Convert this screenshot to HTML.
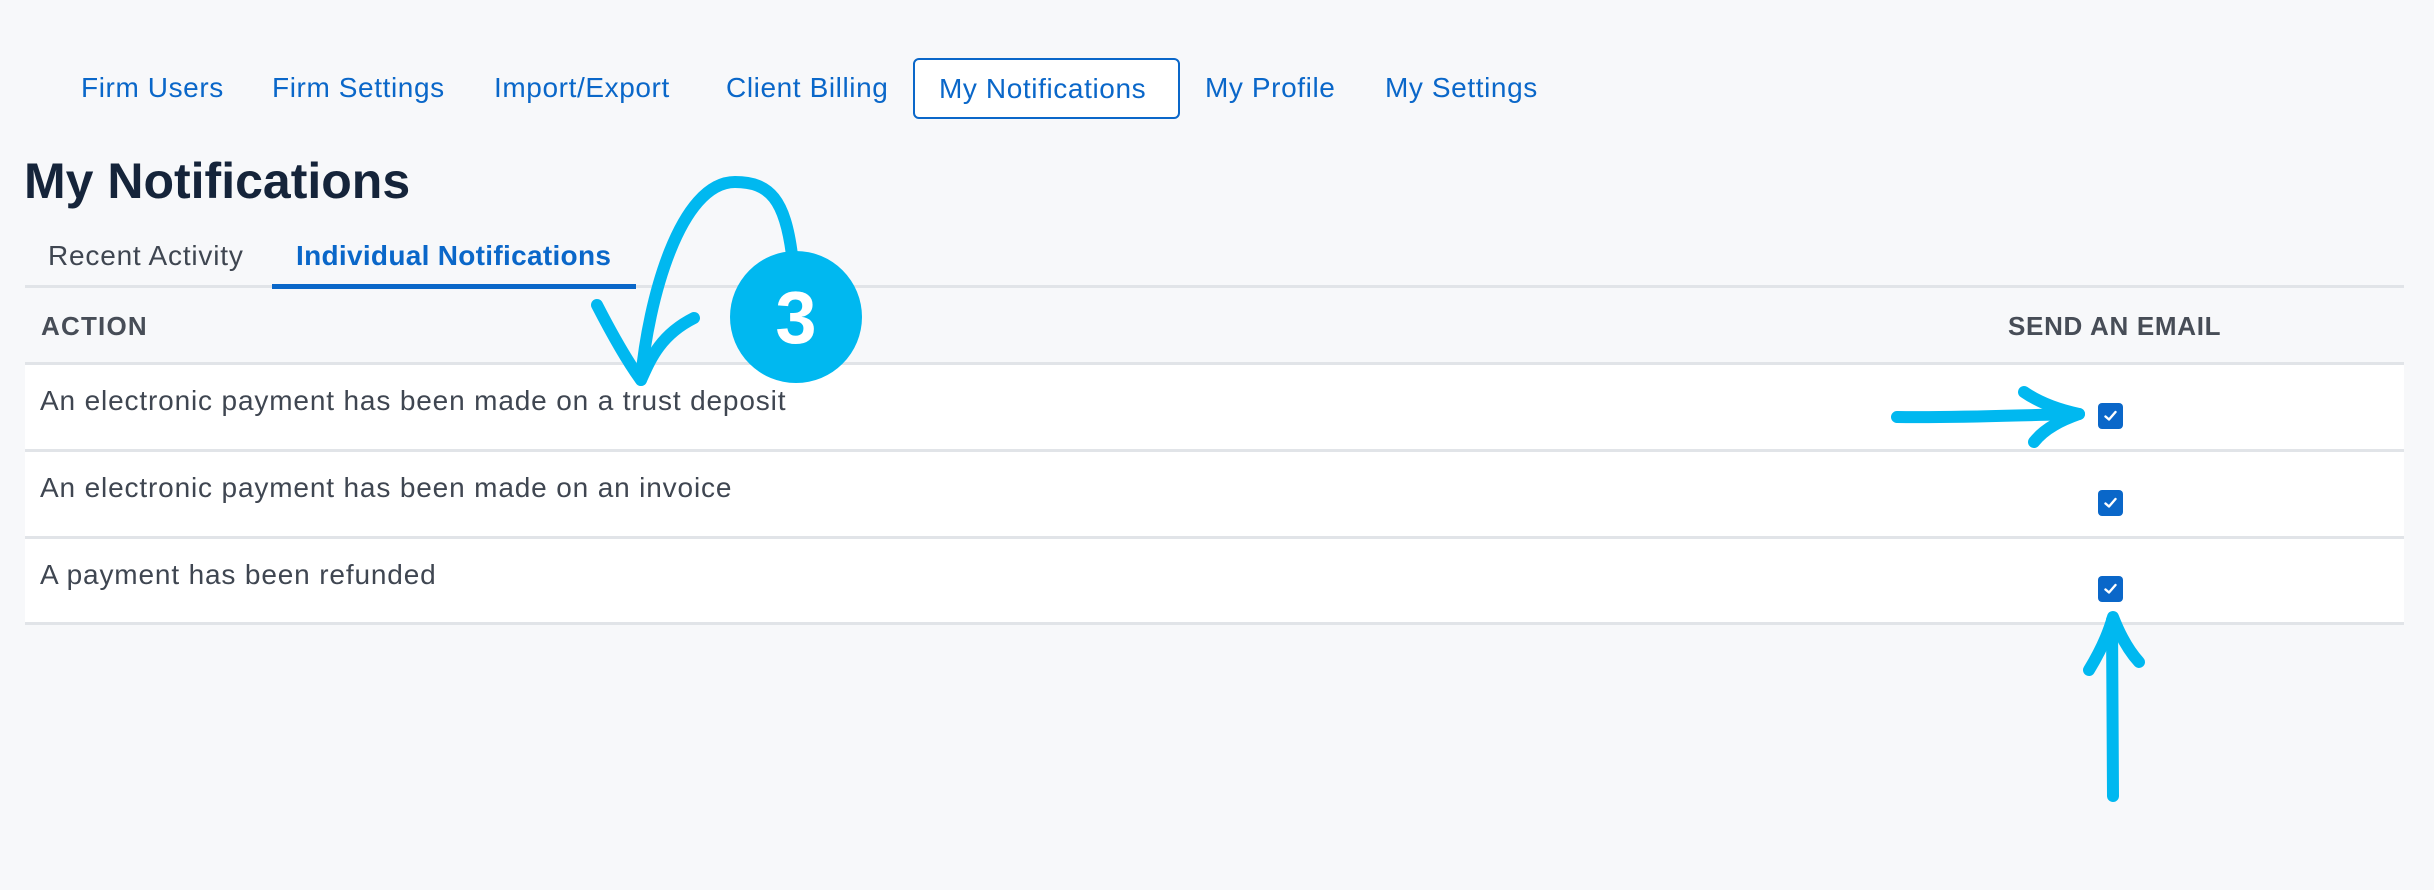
<!DOCTYPE html>
<html><head><meta charset="utf-8"><style>
*{margin:0;padding:0;box-sizing:border-box}
body{width:2434px;height:890px;background:#f7f8fa;font-family:"Liberation Sans",sans-serif;position:relative;overflow:hidden}
.a{position:absolute;white-space:nowrap}
.nav{font-size:28px;color:#0a67c9;top:72px;letter-spacing:0.6px}
.box{position:absolute;left:913px;top:58px;width:267px;height:61px;border:2px solid #0a67c9;border-radius:6px;background:#fff}
.row{position:absolute;left:25px;width:2379px;background:#fff;border-bottom:3px solid #e1e4e8}
.rt{font-size:28px;color:#3f4651;left:40px;letter-spacing:0.85px}
.cb{position:absolute;left:2098px;width:25px;height:26px;background:#0a67c9;border-radius:4px}
.cb svg{position:absolute;left:6px;top:7px}
</style></head><body>
<div class="box"></div>
<div class="a nav" style="left:81px">Firm Users</div>
<div class="a nav" style="left:272px">Firm Settings</div>
<div class="a nav" style="left:494px">Import/Export</div>
<div class="a nav" style="left:726px">Client Billing</div>
<div class="a nav" style="left:939px;top:73px">My Notifications</div>
<div class="a nav" style="left:1205px">My Profile</div>
<div class="a nav" style="left:1385px">My Settings</div>
<div class="a" style="left:24px;top:152px;font-size:50px;font-weight:bold;color:#15243a">My Notifications</div>
<div class="a" style="left:48px;top:240px;font-size:28px;color:#3f4651;letter-spacing:0.8px">Recent Activity</div>
<div class="a" style="left:296px;top:240px;font-size:28px;font-weight:bold;color:#0a67c9;letter-spacing:0.3px">Individual Notifications</div>
<div style="position:absolute;left:25px;top:285px;width:2379px;height:3px;background:#e1e4e8"></div>
<div style="position:absolute;left:272px;top:284px;width:364px;height:5px;background:#0a67c9"></div>
<div class="a" style="left:41px;top:311px;font-size:26px;font-weight:bold;color:#474d57;letter-spacing:1.2px">ACTION</div>
<div class="a" style="left:2008px;top:311px;font-size:26px;font-weight:bold;color:#474d57;letter-spacing:0.7px">SEND AN EMAIL</div>
<div style="position:absolute;left:25px;top:362px;width:2379px;height:3px;background:#e1e4e8"></div>
<div class="row" style="top:365px;height:87px"></div>
<div class="row" style="top:452px;height:87px"></div>
<div class="row" style="top:539px;height:86px"></div>
<div class="a rt" style="top:385px">An electronic payment has been made on a trust deposit</div>
<div class="a rt" style="top:472px">An electronic payment has been made on an invoice</div>
<div class="a rt" style="top:559px">A payment has been refunded</div>
<div class="cb" style="top:403px"><svg width="13" height="12" viewBox="0 0 13 12"><path d="M1.5 6.5 L5 9.5 L11.5 2" stroke="#fff" stroke-width="2.4" fill="none" stroke-linecap="round" stroke-linejoin="round"/></svg></div>
<div class="cb" style="top:490px"><svg width="13" height="12" viewBox="0 0 13 12"><path d="M1.5 6.5 L5 9.5 L11.5 2" stroke="#fff" stroke-width="2.4" fill="none" stroke-linecap="round" stroke-linejoin="round"/></svg></div>
<div class="cb" style="top:576px"><svg width="13" height="12" viewBox="0 0 13 12"><path d="M1.5 6.5 L5 9.5 L11.5 2" stroke="#fff" stroke-width="2.4" fill="none" stroke-linecap="round" stroke-linejoin="round"/></svg></div>
<svg width="2434" height="890" style="position:absolute;left:0;top:0" fill="none" stroke="#00b8f0" stroke-width="12" stroke-linecap="round" stroke-linejoin="round">
<path d="M792 255 C785 200 770 182 735 182 C680 182 648 300 641 380"/>
<path d="M597 305 C615 340 630 365 641 380 C650 360 660 335 694 318"/>
<circle cx="796" cy="317" r="66" fill="#00b8f0" stroke="none"/>
<text x="796" y="343" font-family="Liberation Sans,sans-serif" font-size="74" font-weight="bold" fill="#fff" stroke="none" text-anchor="middle">3</text>
<path d="M1897 417 C1960 418 2020 415 2079 414"/>
<path d="M2024 392 C2040 403 2060 410 2079 414 C2062 420 2045 428 2034 442"/>
<path d="M2113 796 L2112 620"/>
<path d="M2089 670 C2100 652 2108 635 2113 617 C2120 635 2128 650 2139 662"/>
</svg>
</body></html>
